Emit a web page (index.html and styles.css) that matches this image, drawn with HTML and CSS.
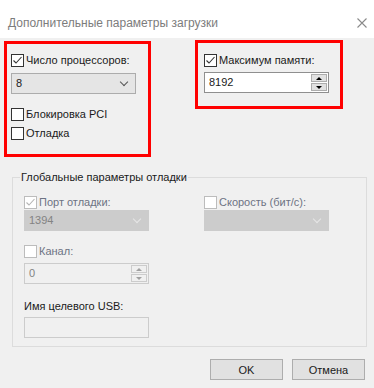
FILE: index.html
```html
<!DOCTYPE html>
<html lang="ru">
<head>
    <meta charset="UTF-8">
    <title>Дополнительные параметры загрузки</title>
    <link rel="stylesheet" href="styles.css">
</head>
<body>
    <div class="titlebar">
        <span class="title">Дополнительные параметры загрузки</span>
        <svg class="close" width="10" height="10" viewBox="0 0 10 10"><path d="M0.5 0.5 L9.5 9.5 M9.5 0.5 L0.5 9.5" stroke="#8a8a8a" stroke-width="1.1" fill="none"/></svg>
    </div>

    <div class="top">
        <div class="mark mark-cpu">
            <label class="check-row">
                <span class="box"><svg width="11" height="11" viewBox="0 0 11 11"><path d="M1.5 5.5 L4 8 L9.5 2" stroke="#333" stroke-width="1.1" fill="none"/></svg></span>
                Число процессоров:
            </label>
            <div class="select select-cpu">8<span class="chev"></span></div>
            <label class="check-row row-pci"><span class="box"></span>Блокировка PCI</label>
            <label class="check-row row-debug"><span class="box"></span>Отладка</label>
        </div>
        <div class="mark mark-mem">
            <label class="check-row">
                <span class="box"><svg width="11" height="11" viewBox="0 0 11 11"><path d="M1.5 5.5 L4 8 L9.5 2" stroke="#333" stroke-width="1.1" fill="none"/></svg></span>
                Максимум памяти:
            </label>
            <div class="input input-mem">8192
                <div class="spin">
                    <span class="spin-btn"><i class="tri-up"></i></span>
                    <span class="spin-btn"><i class="tri-down"></i></span>
                </div>
            </div>
        </div>
    </div>

    <fieldset class="group">
        <legend>Глобальные параметры отладки</legend>
        <div class="group-grid">
            <div class="col">
                <label class="check-row off">
                    <span class="box"><svg width="11" height="11" viewBox="0 0 11 11"><path d="M1.5 5.5 L4 8 L9.5 2" stroke="#b4b4b4" stroke-width="1.1" fill="none"/></svg></span>
                    Порт отладки:
                </label>
                <div class="select disabled">1394<span class="chev"></span></div>
                <label class="check-row off row-channel"><span class="box"></span>Канал:</label>
                <div class="input disabled input-channel">0
                    <div class="spin">
                        <span class="spin-btn"><i class="tri-up"></i></span>
                        <span class="spin-btn"><i class="tri-down"></i></span>
                    </div>
                </div>
                <div class="usb-label">Имя целевого USB:</div>
                <div class="input disabled input-usb"></div>
            </div>
            <div class="col">
                <label class="check-row off"><span class="box"></span>Скорость (бит/с):</label>
                <div class="select disabled"><span class="chev"></span></div>
            </div>
        </div>
    </fieldset>

    <div class="buttons">
        <button class="btn">OK</button>
        <button class="btn">Отмена</button>
    </div>
</body>
</html>
```

FILE: styles.css
```css
body {
    margin: 0;
    width: 374px;
    height: 388px;
    background: #f0f0f0;
    font-family: "Liberation Sans", Arial, sans-serif;
    font-size: 11px;
    color: #1a1a1a;
    overflow: hidden;
}

.titlebar {
    height: 38px;
    background: #fff;
    display: flex;
    align-items: flex-end;
    justify-content: space-between;
    padding: 0 7px 0 8px;
    box-sizing: border-box;
}
.title {
    color: #7c7c7c;
    font-size: 12px;
    line-height: 16px;
    padding-bottom: 7px;
}
.close { margin-bottom: 10px; }

.top {
    display: flex;
    align-items: flex-start;
    padding-left: 4px;
    gap: 44px;
}
.mark {
    border: 3px solid #ff0000;
    box-sizing: border-box;
}
.mark-cpu {
    width: 147px;
    margin-top: 3px;
    padding: 9px 4px 13px;
}
.mark-mem {
    width: 148px;
    margin-top: 2px;
    padding: 10px 6px 13px;
}

.check-row {
    display: flex;
    align-items: center;
    height: 15px;
    line-height: 15px;
    white-space: nowrap;
}
.box {
    width: 13px;
    height: 13px;
    box-sizing: border-box;
    border: 1px solid #333;
    background: #fff;
    margin-right: 2px;
    display: flex;
    align-items: center;
    justify-content: center;
    flex: none;
}
.off { color: #6d7383; }
.off .box { border-color: #bcbcbc; }
.row-pci { margin-top: 13px; }
.row-debug { margin-top: 4px; }

.select {
    position: relative;
    width: 125px;
    height: 21px;
    box-sizing: border-box;
    background: #e5e5e5;
    border: 1px solid #acacac;
    padding-left: 4px;
    line-height: 19px;
}
.select-cpu { margin-top: 5px; }
.chev {
    position: absolute;
    right: 8px;
    top: 5px;
    width: 5px;
    height: 5px;
    border-right: 1px solid #555;
    border-bottom: 1px solid #555;
    transform: rotate(45deg);
}
.select.disabled {
    background: #cccccc;
    border-color: #cccccc;
    color: #838383;
}
.select.disabled .chev { border-color: #e6e6e6; }

.input {
    position: relative;
    width: 125px;
    height: 21px;
    box-sizing: border-box;
    background: #fff;
    border: 1px solid #8f8f8f;
    padding-left: 4px;
    line-height: 19px;
}
.input-mem { margin-top: 4px; }
.input.disabled {
    background: #f0f0f0;
    border-color: #cccccc;
    color: #838383;
}
.spin {
    position: absolute;
    right: 1px;
    top: 1px;
    display: flex;
    flex-direction: column;
    gap: 1px;
}
.spin-btn {
    width: 16px;
    height: 8px;
    box-sizing: border-box;
    background: #e1e1e1;
    border: 1px solid #adadad;
    display: flex;
    align-items: center;
    justify-content: center;
}
.tri-up, .tri-down {
    width: 0;
    height: 0;
    border-left: 3px solid transparent;
    border-right: 3px solid transparent;
}
.tri-up { border-bottom: 3px solid #000; }
.tri-down { border-top: 3px solid #000; }
.disabled .spin-btn { background: #f0f0f0; border-color: #cccccc; }
.disabled .tri-up { border-bottom-color: #a0a0a0; }
.disabled .tri-down { border-top-color: #a0a0a0; }

.group {
    margin: 13px 7px 0 12px;
    padding: 0;
    border: 1px solid #dcdcdc;
}
.group legend {
    margin-left: 7px;
    padding: 0 1px;
    line-height: 15px;
    color: #1a1a1a;
}
.group-grid {
    display: grid;
    grid-template-columns: 125px 125px;
    column-gap: 55px;
    padding: 10px 0 8px 11px;
}
.row-channel { margin-top: 13px; }
.input-channel { margin-top: 4px; }
.usb-label {
    margin-top: 15px;
    line-height: 15px;
}
.input-usb { margin-top: 3px; }

.buttons {
    display: flex;
    justify-content: flex-end;
    gap: 9px;
    padding-right: 9px;
    margin-top: 12px;
}
.btn {
    width: 73px;
    height: 21px;
    background: #e1e1e1;
    border: 1px solid #adadad;
    font-family: "Liberation Sans", Arial, sans-serif;
    font-size: 11px;
    color: #1a1a1a;
    padding: 0;
}
```
